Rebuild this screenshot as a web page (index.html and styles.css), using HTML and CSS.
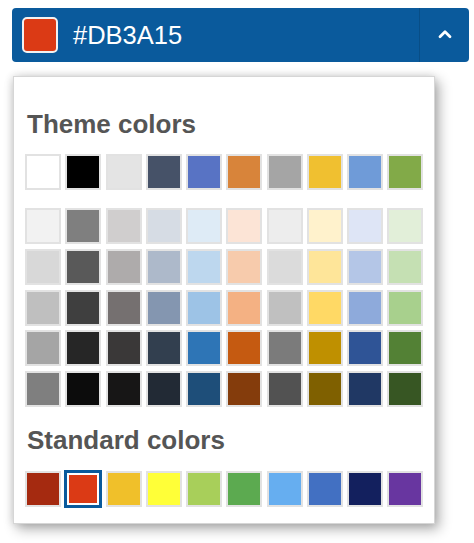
FILE: index.html
```html
<!DOCTYPE html>
<html>
<head>
<meta charset="utf-8">
<link rel="stylesheet" href="styles.css">
</head>
<body>
<div class="page">
  <div class="picker-bar">
    <span class="current"></span>
    <span class="hex">#DB3A15</span>
    <span class="toggle">
      <svg width="16" height="10" viewBox="0 0 16 10"><polyline points="3,7.8 8,2.8 13,7.8" fill="none" stroke="#fff" stroke-width="2.8" stroke-linecap="round" stroke-linejoin="round"/></svg>
    </span>
  </div>
  <div class="panel">
    <div class="title">Theme colors</div>
    <div class="grid theme">
      <span class="sw" style="background:#ffffff"></span>
      <span class="sw" style="background:#000000"></span>
      <span class="sw" style="background:#e4e4e4"></span>
      <span class="sw" style="background:#465268"></span>
      <span class="sw" style="background:#5873c4"></span>
      <span class="sw" style="background:#d8843a"></span>
      <span class="sw" style="background:#a5a5a5"></span>
      <span class="sw" style="background:#f0c030"></span>
      <span class="sw" style="background:#6f9bd8"></span>
      <span class="sw" style="background:#82aa48"></span>
    </div>
    <div class="grid shades">
      <span class="sw" style="background:#f2f2f2"></span>
      <span class="sw" style="background:#7f7f7f"></span>
      <span class="sw" style="background:#d0cece"></span>
      <span class="sw" style="background:#d6dce4"></span>
      <span class="sw" style="background:#deebf6"></span>
      <span class="sw" style="background:#fce4d6"></span>
      <span class="sw" style="background:#ededed"></span>
      <span class="sw" style="background:#fff2cc"></span>
      <span class="sw" style="background:#dee5f6"></span>
      <span class="sw" style="background:#e2efd9"></span>

      <span class="sw" style="background:#d8d8d8"></span>
      <span class="sw" style="background:#595959"></span>
      <span class="sw" style="background:#aeabab"></span>
      <span class="sw" style="background:#adb9ca"></span>
      <span class="sw" style="background:#bdd7ee"></span>
      <span class="sw" style="background:#f7cbac"></span>
      <span class="sw" style="background:#dbdbdb"></span>
      <span class="sw" style="background:#fee599"></span>
      <span class="sw" style="background:#b4c6e7"></span>
      <span class="sw" style="background:#c5e0b3"></span>

      <span class="sw" style="background:#bfbfbf"></span>
      <span class="sw" style="background:#3f3f3f"></span>
      <span class="sw" style="background:#757070"></span>
      <span class="sw" style="background:#8496b0"></span>
      <span class="sw" style="background:#9dc3e6"></span>
      <span class="sw" style="background:#f4b183"></span>
      <span class="sw" style="background:#c0c0c0"></span>
      <span class="sw" style="background:#ffd965"></span>
      <span class="sw" style="background:#8eaadb"></span>
      <span class="sw" style="background:#a8d08d"></span>

      <span class="sw" style="background:#a5a5a5"></span>
      <span class="sw" style="background:#262626"></span>
      <span class="sw" style="background:#3a3838"></span>
      <span class="sw" style="background:#323f4f"></span>
      <span class="sw" style="background:#2e75b6"></span>
      <span class="sw" style="background:#c55a11"></span>
      <span class="sw" style="background:#7b7b7b"></span>
      <span class="sw" style="background:#bf9000"></span>
      <span class="sw" style="background:#2f5496"></span>
      <span class="sw" style="background:#538135"></span>

      <span class="sw" style="background:#7f7f7f"></span>
      <span class="sw" style="background:#0c0c0c"></span>
      <span class="sw" style="background:#171616"></span>
      <span class="sw" style="background:#222a35"></span>
      <span class="sw" style="background:#1e4e79"></span>
      <span class="sw" style="background:#843c0c"></span>
      <span class="sw" style="background:#525252"></span>
      <span class="sw" style="background:#7f6000"></span>
      <span class="sw" style="background:#203864"></span>
      <span class="sw" style="background:#375623"></span>
    </div>
    <div class="title std-title">Standard colors</div>
    <div class="grid standard">
      <span class="sw" style="background:#a52a10"></span>
      <span class="sw selected" style="background:#db3a15"></span>
      <span class="sw" style="background:#f0c02a"></span>
      <span class="sw" style="background:#ffff38"></span>
      <span class="sw" style="background:#a8cf5a"></span>
      <span class="sw" style="background:#5caa50"></span>
      <span class="sw" style="background:#66aef0"></span>
      <span class="sw" style="background:#4270c2"></span>
      <span class="sw" style="background:#13205e"></span>
      <span class="sw" style="background:#6836a0"></span>
    </div>
  </div>
</div>
</body>
</html>
```

FILE: styles.css
```css
html, body {
  margin: 0;
  padding: 0;
  background: #ffffff;
  font-family: "Liberation Sans", Arial, sans-serif;
}

.page {
  min-height: 543px;
  box-sizing: border-box;
  padding: 8px 0 0 12px;
}

.picker-bar {
  display: flex;
  align-items: center;
  width: 457px;
  height: 54px;
  box-sizing: border-box;
  padding-left: 10px;
  background: #0a5a9c;
  border-radius: 4px;
  color: #ffffff;
}

.current {
  width: 36px;
  height: 36px;
  box-sizing: border-box;
  border: 2px solid #f2f2f2;
  border-radius: 5px;
  background: #db3a15;
}

.hex {
  flex: 1;
  margin-left: 15px;
  font-size: 25.5px;
  line-height: 30px;
}

.toggle {
  align-self: stretch;
  width: 49px;
  border-left: 1px solid rgba(0, 0, 0, 0.13);
  display: flex;
  align-items: center;
  justify-content: center;
}

.toggle svg {
  display: block;
  margin-top: -3px;
}

.panel {
  margin: 14px 0 0 1px;
  width: 422px;
  height: 448px;
  box-sizing: border-box;
  border: 1px solid #d6d6d6;
  background: #ffffff;
  box-shadow: 4px 5px 12px rgba(0, 0, 0, 0.32), -1px 0 8px rgba(0, 0, 0, 0.12);
  padding: 32px 0 0 11px;
}

.title {
  margin-left: 2px;
  font-size: 26px;
  line-height: 30px;
  font-weight: bold;
  color: #555555;
}

.grid {
  display: grid;
  grid-template-columns: repeat(10, 36px);
  column-gap: 4.25px;
  row-gap: 4.75px;
}

.theme {
  margin-top: 15px;
}

.shades {
  margin-top: 18px;
}

.std-title {
  margin-top: 18px;
}

.standard {
  margin-top: 16px;
}

.sw {
  display: block;
  width: 36px;
  height: 36px;
  box-sizing: border-box;
  border: 2px solid #e2e2e2;
}

.sw.selected {
  border: 4px solid #ffffff;
  outline: 3px solid #0a5a9c;
  outline-offset: -2px;
}
```
